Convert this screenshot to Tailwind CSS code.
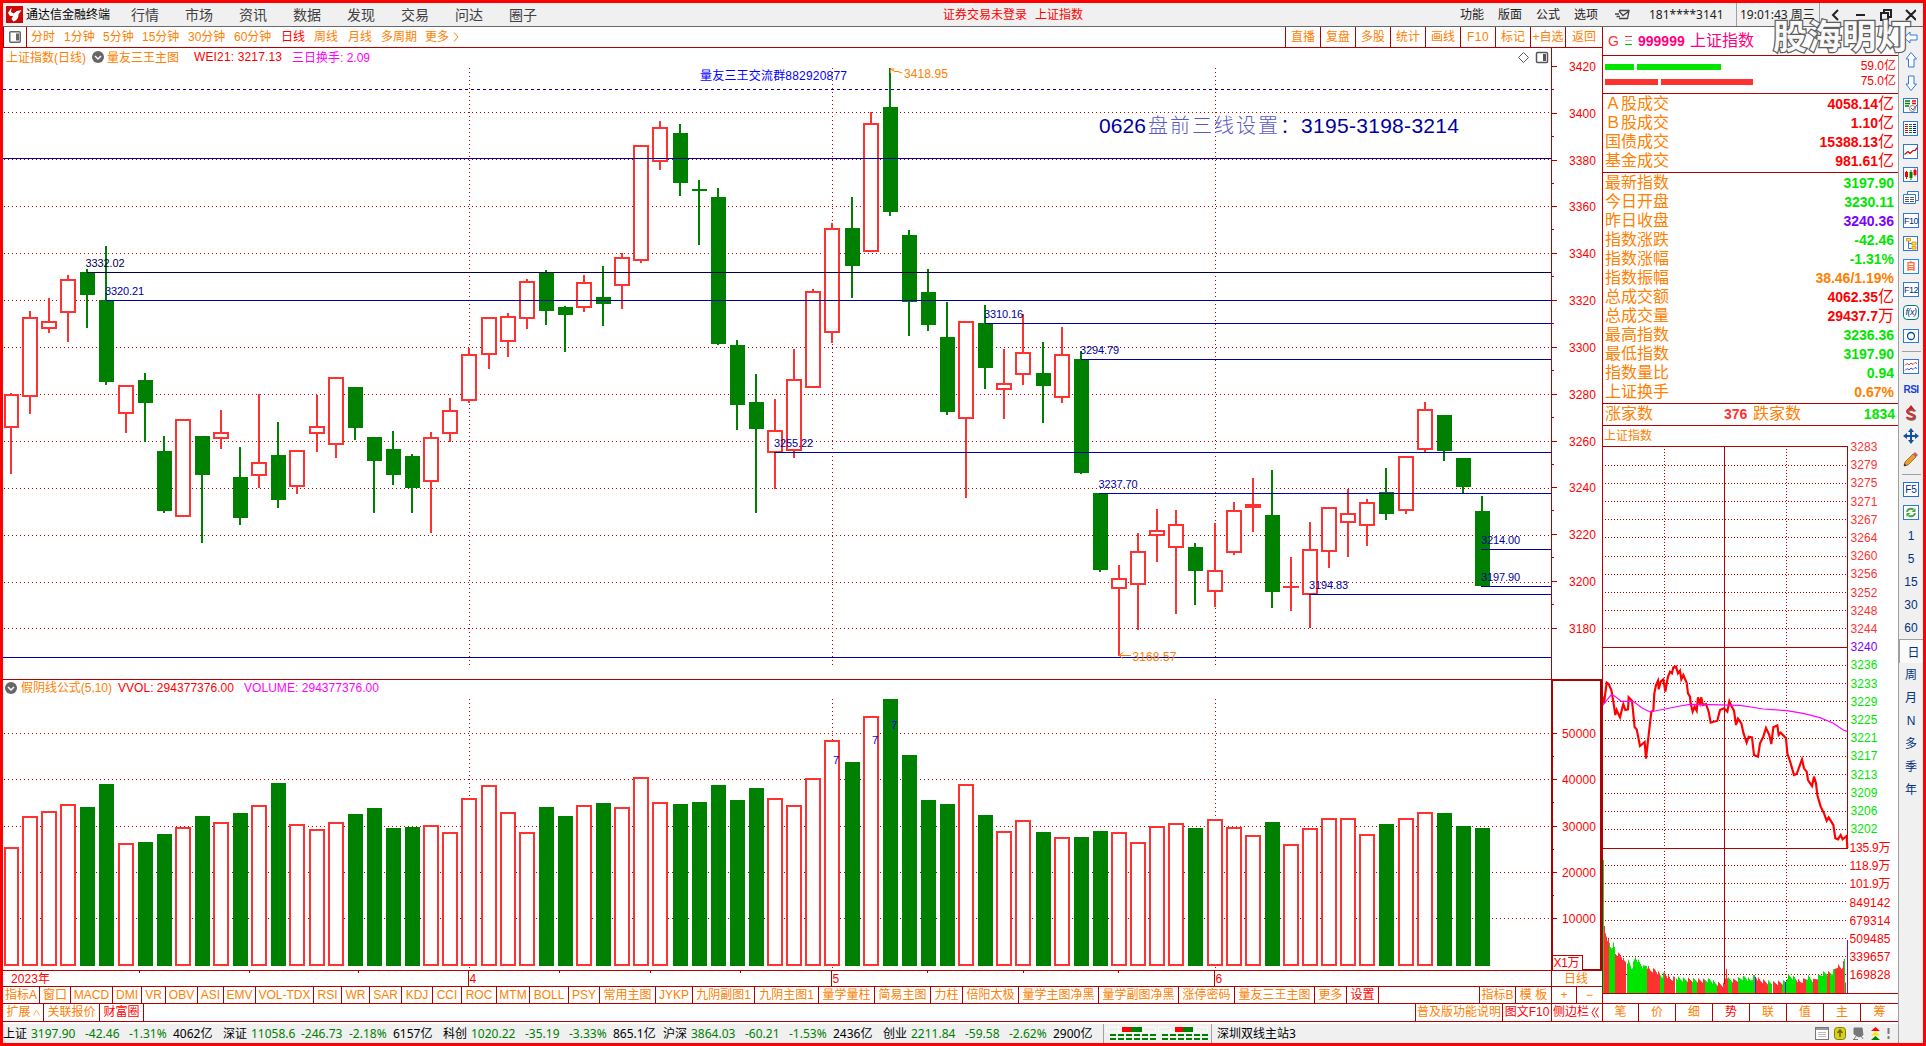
<!DOCTYPE html>
<html lang="zh-CN">
<head>
  <meta charset="UTF-8">
  <meta name="viewport" content="width=device-width, initial-scale=1.0">
  <title>通达信金融终端</title>
  <script src="https://cdn.jsdelivr.net/npm/@tailwindcss/browser@4"></script>
</head>
<body class="bg-white">
<div class="relative w-[1926px] h-[1046px] border-[3px] border-[#ff0000] flex flex-col overflow-hidden text-[12px] leading-none font-['Liberation_Sans','Noto_Sans_CJK_SC',sans-serif] whitespace-nowrap">

  <!-- Title bar -->
  <header class="h-6 shrink-0 flex items-center bg-[#f0f0f0] border-b border-[#696969] text-[#404040] text-[14px]">
    <svg class="ml-[3px] w-[17px] h-[17px] shrink-0" viewBox="0 0 17 17"><rect width="17" height="17" fill="#c80a0a"/><path d="M5.500 1.500L2 7l2 3h3l-1.500 3 2 2.500c4-1.500 5-4 5-7L15.500 4 11 5 7.500 7.500 5 6z" fill="#fff"/></svg>
    <span class="ml-[3px] w-[105px] text-[12px] text-black">通达信金融终端</span>
    <nav class="flex">
      <span class="w-[54px]">行情</span><span class="w-[54px]">市场</span><span class="w-[54px]">资讯</span><span class="w-[54px]">数据</span><span class="w-[54px]">发现</span><span class="w-[54px]">交易</span><span class="w-[54px]">问达</span><span class="w-[54px]">圈子</span>
    </nav>
    <div class="ml-[380px] flex text-[12px] text-[#ff0000]"><span class="w-[92px]">证券交易未登录</span><span>上证指数</span></div>
    <div class="ml-auto flex items-center h-full text-[12px] text-[#202020]">
      <span class="w-[38px]">功能</span><span class="w-[38px]">版面</span><span class="w-[38px]">公式</span><span class="w-[40px]">选项</span>
      <svg class="w-4 h-3 mr-[19px]" viewBox="0 0 16 12" fill="none" stroke="#444" stroke-width="1.300"><path d="M5 1.500h10l-1.500 8H5M5 2l4 4.500L15 2M1 5h4M2.500 7.500H6"/></svg>
      <span class="w-[87px] font-['Noto_Sans']">181****3141</span>
      <div class="h-full w-[84px] border-x border-[#a0a0a0] flex items-center pl-[3px] font-['Noto_Sans','Noto_Sans_CJK_SC']">19:01:43 周三</div>
      <svg class="w-[96px] h-[20px] mr-[7px]" viewBox="1820 4 96 20" fill="none" stroke="#222" stroke-width="2"><path d="M1838 9l-5 5 5 5M1856 14h9M1881 12h7v7h-7zM1884 12v-3h7v7h-3M1906 9l10 10M1916 9l-10 10"/></svg>
    </div>
  </header>

  <div class="flex flex-1 min-h-0">
    <div class="w-[1895px] shrink-0 flex flex-col">
      <div class="flex h-[995px] shrink-0">

        <!-- Chart column -->
        <main class="w-[1599px] shrink-0 flex flex-col">
          <div class="h-[21px] shrink-0 flex items-center border-b border-[#b00000] text-[#ff8000]">
            <div class="w-6 h-full border-x border-[#b00000] flex items-center justify-center mr-1">
              <svg class="w-3 h-3" viewBox="0 0 12 12"><rect x=".75" y=".75" width="10.500" height="10.500" rx="1" fill="none" stroke="#666" stroke-width="1.500"/><rect x="7" y="2.500" width="3" height="7" fill="#666"/></svg>
            </div>
            <span class="w-[33px]">分时</span><span class="w-[39px]">1分钟</span><span class="w-[39px]">5分钟</span><span class="w-[46px]">15分钟</span><span class="w-[46px]">30分钟</span><span class="w-[47px]">60分钟</span><span class="w-[33px] text-[#ff0000]">日线</span><span class="w-[34px]">周线</span><span class="w-[33px]">月线</span><span class="w-[44px]">多周期</span><span class="w-[28px]">更多</span>
            <svg class="w-2 h-3" viewBox="0 0 8 12" fill="none" stroke="#ff8000"><path d="M1 1.500l4 4.500-4 4.500"/></svg>
            <div class="ml-auto h-full flex text-center leading-[20px] border-l border-[#b00000]">
              <span class="w-[35px] border-r border-[#b00000]">直播</span><span class="w-[35px] border-r border-[#b00000]">复盘</span><span class="w-[35px] border-r border-[#b00000]">多股</span><span class="w-[35px] border-r border-[#b00000]">统计</span><span class="w-[35px] border-r border-[#b00000]">画线</span><span class="w-[35px] border-r border-[#b00000] tracking-[.5px]">F10</span><span class="w-[35px] border-r border-[#b00000]">标记</span><span class="w-[35px] border-r border-[#b00000]">+自选</span><span class="w-[36px]">返回</span>
            </div>
          </div>

          <svg id="kline" class="w-[1599px] h-[939px] shrink-0 block" viewBox="3 48 1599 939"></svg>

          <!-- Indicator tabs -->
          <div class="h-[17px] shrink-0 flex border-b border-[#b00000] text-center leading-[16px] text-[#ff8000] *:shrink-0 *:border-r *:border-[#b00000]">
            <span class="w-[37px]">指标A</span><span class="w-[31px]">窗口</span><span class="w-[42px]">MACD</span><span class="w-[29px]">DMI</span><span class="w-[24px]">VR</span><span class="w-[32px]">OBV</span><span class="w-[26px]">ASI</span><span class="w-[32px]">EMV</span><span class="w-[58px]">VOL-TDX</span><span class="w-[28px]">RSI</span><span class="w-[28px]">WR</span><span class="w-[32px]">SAR</span><span class="w-[31px]">KDJ</span><span class="w-[29px]">CCI</span><span class="w-[35px]">ROC</span><span class="w-[33px]">MTM</span><span class="w-[39px]">BOLL</span><span class="w-[31px]">PSY</span><span class="w-[56px]">常用主图</span><span class="w-[37px]">JYKP</span><span class="w-[62px]">九阴副图1</span><span class="w-[64px]">九阴主图1</span><span class="w-[56px]">量学量柱</span><span class="w-[56px]">简易主图</span><span class="w-[32px]">力柱</span><span class="w-[56px]">倍阳太极</span><span class="w-[80px]">量学主图净黑</span><span class="w-[80px]">量学副图净黑</span><span class="w-[56px]">涨停密码</span><span class="w-[80px]">量友三王主图</span><span class="w-[32px]">更多</span><span class="w-[32px] text-[#ff0000]">设置</span>
            <span class="w-[101px]"></span><span class="w-[36px]">指标B</span><span class="w-[36px]">模 板</span><span class="w-[25px]">+</span><span class="w-[25px] !border-r-0">−</span>
          </div>
          <div class="h-[18px] shrink-0 flex border-b border-[#b00000] text-center leading-[17px] text-[#ff8000] *:shrink-0 *:border-r *:border-[#b00000]">
            <span class="w-[41px] flex justify-center items-center">扩展<svg class="ml-[2px] w-[7px] h-[7px]" viewBox="0 0 7 7" fill="none" stroke="#ffb060"><path d="M.5 6.500l3-5.500 3 5.500"/></svg></span><span class="w-[56px]">关联报价</span><span class="w-[44px] text-[#ff0000]">财富圈</span>
            <span class="w-[1272px]"></span><span class="w-[87px]">普及版功能说明</span><span class="w-[49px] text-[#ff0000]">图文F10</span><span class="w-[50px] !border-r-0 flex items-center pl-px text-[#ff0000]">侧边栏<svg class="ml-[2px] w-[8px] h-[11px]" viewBox="0 0 8 11" fill="none" stroke="#ff0000"><path d="M4 .5l-3 5 3 5M7.500 .5l-3 5 3 5"/></svg></span>
          </div>
        </main>

        <!-- Quote panel -->
        <aside class="w-[296px] shrink-0 flex flex-col border-l border-[#b00000]">
          <div class="h-[29px] shrink-0 flex items-center border-b border-[#b00000] pl-[5px] pb-px">
            <span class="text-[14px] text-[#ff3232] w-[17px]">G</span>
            <svg class="w-[7px] h-[9px] mr-[6px]" viewBox="0 0 7 9"><path d="M0 .5h7" stroke="#ff3232"/><path d="M0 4.500h7" stroke="#bbb"/><path d="M0 8.500h7" stroke="#00c800"/></svg>
            <span class="text-[14px] font-bold text-[#ff0080] w-[52px]">999999</span>
            <span class="text-[16px] text-[#ff0080]">上证指数</span>
          </div>
          <div class="h-[38px] shrink-0 border-b border-[#b00000] pl-[2px] pr-[2px] pt-[3px] text-[#ff0000]">
            <div class="h-[15px] flex items-center"><div class="w-[29px] h-[6px] bg-[#00e600]"></div><div class="ml-[3px] w-[84px] h-[6px] bg-[#00e600]"></div><span class="ml-auto pb-[2px]">59.0亿</span></div>
            <div class="h-[15px] flex items-center"><div class="w-[53px] h-[6px] bg-[#ff3232]"></div><div class="ml-[3px] w-[92px] h-[6px] bg-[#ff3232]"></div><span class="ml-auto pb-[2px]">75.0亿</span></div>
          </div>
          <div id="turnover" class="h-[79px] shrink-0 border-b border-[#b00000] pl-[2px] pr-[4px]"></div>
          <div id="quotes" class="h-[231px] shrink-0 border-b border-[#b00000] pl-[2px] pr-[4px]"></div>
          <div class="h-[22px] shrink-0 flex items-center border-b border-[#b00000] pl-[2px] pr-[3px] pb-px text-[16px] text-[#ff8000]">
            <span class="w-[119px]">涨家数</span><span class="w-[29px] text-[14px] font-bold text-[#ff3232]">376</span><span>跌家数</span><span class="ml-auto text-[14px] font-bold text-[#00e600]">1834</span>
          </div>
          <svg id="minute" class="w-[295px] h-[578px] shrink-0 block" viewBox="1603 426 295 578"></svg>
          <div class="h-[18px] shrink-0 flex border-b border-[#b00000] text-center leading-[17px] text-[#ff8000]">
            <span class="w-[36px] border-r border-[#b00000]">笔</span><span class="w-[37px] border-r border-[#b00000]">价</span><span class="w-[37px] border-r border-[#b00000]">细</span><span class="w-[37px] border-r border-[#b00000] text-[#ff0000]">势</span><span class="w-[37px] border-r border-[#b00000]">联</span><span class="w-[37px] border-r border-[#b00000]">值</span><span class="w-[37px] border-r border-[#b00000]">主</span><span class="w-[37px]">筹</span>
          </div>
        </aside>
      </div>

      <!-- Status bar -->
      <footer class="mt-[2px] h-[19px] flex items-center bg-[#f0f0f0] font-['Noto_Sans','Noto_Sans_CJK_SC',sans-serif] text-black">
        <div class="grid grid-cols-[28px_54px_44px_44px_50px]"><span>上证</span><span class="text-[#008000]">3197.90</span><span class="text-[#008000]">-42.46</span><span class="text-[#008000]">-1.31%</span><span>4062亿</span></div>
        <div class="grid grid-cols-[28px_50px_48px_44px_50px]"><span>深证</span><span class="text-[#008000]">11058.6</span><span class="text-[#008000]">-246.73</span><span class="text-[#008000]">-2.18%</span><span>6157亿</span></div>
        <div class="grid grid-cols-[28px_54px_44px_44px_50px]"><span>科创</span><span class="text-[#008000]">1020.22</span><span class="text-[#008000]">-35.19</span><span class="text-[#008000]">-3.33%</span><span>865.1亿</span></div>
        <div class="grid grid-cols-[28px_54px_44px_44px_50px]"><span>沪深</span><span class="text-[#008000]">3864.03</span><span class="text-[#008000]">-60.21</span><span class="text-[#008000]">-1.53%</span><span>2436亿</span></div>
        <div class="grid grid-cols-[28px_54px_44px_44px_50px]"><span>创业</span><span class="text-[#008000]">2211.84</span><span class="text-[#008000]">-59.58</span><span class="text-[#008000]">-2.62%</span><span>2900亿</span></div>
        <div class="h-full w-[109px] border-x border-[#a0a0a0] pl-[2px]">
          <svg class="w-[104px] h-[18px]" viewBox="1106 1024 104 18">
            <path d="M1106.500 1032v-5h49v5zM1158.500 1032v-5h49v5zM1118.500 1027v5M1143.500 1027v5M1170.500 1027v5M1195.500 1027v5" fill="none" stroke="#fff"/>
            <path d="M1122 1027h9v5h-9zM1175 1027h8v5h-8z" fill="#ff0000"/><path d="M1131 1027h11v5h-11zM1183 1027h10v5h-10z" fill="#008000"/>
            <path d="M1110 1035h47M1110 1039h47M1162 1035h47M1162 1039h47" stroke="#008000" stroke-width="2" stroke-dasharray="6 2"/>
          </svg>
        </div>
        <span class="ml-[5px]">深圳双线主站3</span>
        <svg class="ml-auto mr-[6px] w-[78px] h-[16px]" viewBox="1814 1025 78 16">
          <rect x="1815.500" y="1026.500" width="13" height="12" fill="#fff" stroke="#777"/><path d="M1816 1028h12" stroke="#999" stroke-width="2"/><path d="M1818 1031.500h8M1818 1033.500h8M1818 1035.500h8" stroke="#bbb"/>
          <rect x="1834.500" y="1026.500" width="11" height="12" rx="3" fill="#d8d020" stroke="#808000"/><path d="M1840 1036v-6M1837.500 1032l2.500-3 2.500 3" stroke="#6b6b00" fill="none" stroke-width="1.500"/>
          <path d="M1854 1027l8 0 1 7-4 2-5-3zM1857 1034l-3 4M1853 1038.500h5M1861 1035l2 3" fill="#777" stroke="#777"/>
          <path d="M1871 1030l4.500-4 4.500 4z" fill="#f00"/><path d="M1871 1034.500l4.500-4 4.500 4z" fill="#ee0"/><path d="M1871 1039l4.500-4 4.500 4z" fill="#008000"/>
          <path d="M1888.500 1027v6M1888.500 1035v3" stroke="#777" stroke-width="2"/>
        </svg>
      </footer>
    </div>

    <!-- Right tool strip -->
    <div class="w-[25px] shrink-0 bg-[#f0f0f0] border-l border-[#a0a0a0] flex flex-col items-center text-[#003080] *:h-[23px] *:w-full *:shrink-0 *:flex *:items-center *:justify-center">
      <div class="!h-[21px]"><svg class="w-4 h-4" viewBox="0 0 16 16" fill="#fff" stroke="#3278dc"><path d="M1 7.500l6-5.500v3h7v5H7v3z"/></svg></div>
      <div><svg class="w-4 h-4" viewBox="0 0 16 16" fill="#fff" stroke="#3278dc"><path d="M8 .5l5.500 6.500H11v8H5.500V7H3z"/></svg></div>
      <div><svg class="w-4 h-4" viewBox="0 0 16 16" fill="#fff" stroke="#3278dc"><path d="M8 15.500L13.500 9H11V1H5.500v8H3z"/></svg></div>
      <div><svg class="w-4 h-4" viewBox="0 0 16 16" fill="none"><rect x=".5" y=".5" width="14" height="14" fill="#fff" stroke="#3278dc"/><path d="M2 3h5M2 5.500h5M2 8h4" stroke="#008000" stroke-width="1.300"/><path d="M9 3h4M9 5.500h4" stroke="#f00" stroke-width="1.300"/><circle cx="9.500" cy="10.500" r="3" stroke="#888"/><path d="M8 10l2 2 4-5" stroke="#555"/></svg></div>
      <div><svg class="w-4 h-4" viewBox="0 0 16 16" fill="none"><rect x=".5" y=".5" width="14" height="14" fill="#fff" stroke="#3278dc"/><path d="M2 3.500h3M2 5.500h3M2 7.500h3M2 9.500h3M2 11.500h3" stroke="#f00"/><path d="M6 3.500h3M6 5.500h3M6 7.500h3M6 9.500h3M6 11.500h3" stroke="#008000"/><path d="M10 3.500h3M10 5.500h3M10 7.500h3M10 9.500h3M10 11.500h3" stroke="#00f"/></svg></div>
      <div><svg class="w-4 h-4" viewBox="0 0 16 16" fill="none"><rect x=".5" y=".5" width="14" height="14" fill="#fff" stroke="#3278dc"/><path d="M1.500 10.500l3.500-3 2 2 3-3h2l2.500-3" stroke="#d00000" stroke-width="1.200"/></svg></div>
      <div><svg class="w-4 h-4" viewBox="0 0 16 16"><rect x=".5" y=".5" width="14" height="14" fill="#fff" stroke="#3278dc"/><path d="M2 5h3v5H2zM10.500 3h3v5h-3z" fill="#f00"/><path d="M3.500 4v8M12 1.500v8" stroke="#f00"/><path d="M6.500 5h3v6h-3z" fill="#008000"/><path d="M8 3v10" stroke="#008000"/></svg></div>
      <div><svg class="w-4 h-4" viewBox="0 0 16 16" fill="#fff" stroke="#3278dc"><path d="M4.500 1.500h11v9h-11z"/><path d="M.5 4.500h12v9H.5z"/><path d="M2 7.500h4M7 7.500h4M2 9.500h4M7 9.500h4M2 11.500h4M7 11.500h4" stroke="#555"/></svg></div>
      <div><span class="w-4 h-[15px] border border-[#3278dc] bg-white text-[9px] leading-[14px] text-center tracking-tighter">F10</span></div>
      <div><svg class="w-4 h-4" viewBox="0 0 16 16" fill="none"><rect x=".5" y=".5" width="14" height="14" fill="#fff" stroke="#3278dc"/><path d="M5.500 5v7.500H9M5.500 7.500H9" stroke="#3278dc"/><path d="M3.500 2.500h4v2.500h-4zM9 6h4v3H9zM9 10.500h4v2.500H9z" fill="#ffe060" stroke="#e0a000"/></svg></div>
      <div><span class="w-4 h-[15px] border border-[#1e8ce6] bg-white text-[10px] leading-[13px] text-center font-bold text-[#ff7040]">自</span></div>
      <div><span class="w-4 h-[15px] border border-[#3278dc] bg-white text-[9px] leading-[14px] text-center tracking-tighter">F12</span></div>
      <div><span class="w-4 h-[15px] border border-[#008080] rounded bg-white text-[9px] leading-[13px] text-center italic tracking-tighter">f(x)</span></div>
      <div><svg class="w-4 h-[14px]" viewBox="0 0 16 14" fill="#fff" stroke="#3278dc"><rect x=".5" y=".5" width="15" height="13"/><circle cx="8" cy="7" r="3.500" stroke="#0050a0" stroke-width="1.300"/></svg></div>
      <div class="!h-2"><i class="w-[19px] h-px bg-[#a0a0a0]"></i></div>
      <div><svg class="w-4 h-4" viewBox="0 0 16 16" fill="none"><rect x=".5" y=".5" width="15" height="14" fill="#fff" stroke="#3278dc"/><path d="M2 6.500l2-2 2 1.500 2-2 2 1.500 2-2 2 1" stroke="#f03030"/><path d="M2 11.500l2-2 2 1.500 2-2 2 1.500 2-2 2 1" stroke="#3050e0"/></svg></div>
      <div class="font-bold text-[10px] text-[#2040d0] tracking-tighter">RSI</div>
      <div><svg class="w-[14px] h-4" viewBox="0 0 14 16" fill="none"><path d="M11 6.500C10 4 4 4 4 7s7 2 7 5-6 3.500-7.500.5" stroke="#707070" stroke-width="2.500"/><path d="M10 6C9 3.500 3 3.500 3 6.500s7 2 7 5-6 3-7.500.5" stroke="#d83030" stroke-width="2"/><path d="M7 0l3 4H4z" fill="#c02020"/></svg></div>
      <div><svg class="w-4 h-4" viewBox="0 0 16 16"><path d="M8 0l3 4H9v3h3V5l4 3-4 3V9H9v3h2l-3 4-3-4h2V9H4v2L0 8l4-3v2h3V4H5z" fill="#1450a0"/></svg></div>
      <div><svg class="w-4 h-4" viewBox="0 0 16 16"><path d="M1 15l1-4 8-8 3 3-8 8z" fill="#e8a030" stroke="#805010" stroke-width=".7"/><path d="M10 3l2-2 3 3-2 2z" fill="#c86070"/><path d="M1 15l.6-2.400L3.500 14.400z" fill="#222"/></svg></div>
      <div class="!h-2"><i class="w-[19px] h-px bg-[#a0a0a0]"></i></div>
      <div><span class="w-4 h-[15px] border border-[#1e6edc] bg-white text-[10px] leading-[14px] text-center">F5</span></div>
      <div><svg class="w-4 h-[15px]" viewBox="0 0 16 15" fill="none"><rect x=".5" y=".5" width="15" height="14" fill="#fff" stroke="#3278dc"/><path d="M4 7a4 3.500 0 0 1 6.500-2.500M12 8a4 3.500 0 0 1-6.500 2.500" stroke="#40a840" stroke-width="2"/><path d="M12.500 3v4H8.500zM3.500 12V8h4z" fill="#40a840"/></svg></div>
      <div>1</div><div>5</div><div>15</div><div>30</div><div>60</div>
      <div class="!h-[24px] bg-[#fafafa] border-t border-l border-[#a0a0a0] pt-[2px] pl-1">日</div>
      <div>周</div><div>月</div><div>N</div><div>多</div><div>季</div><div>年</div>
    </div>
  </div>

  <!-- Watermark over the top right corner -->
  <svg class="absolute left-[1764px] top-[8px] w-[150px] h-[50px]" viewBox="0 0 150 50">
    <text x="6" y="38" font-size="34" font-weight="bold" textLength="138" font-family="Noto Sans CJK SC" fill="#fff" fill-opacity=".95" stroke="#606060" stroke-width="2.500" paint-order="stroke">股海明灯</text>
  </svg>
</div>

<script>
  const RED = '#ff3232', GREEN = '#008000', GRID = '#b00000', NAVY = '#0000a0', ORANGE = '#ff8000';

  const line = (x1, y1, x2, y2, c, extra = '') => `<path d="M${x1} ${y1}L${x2} ${y2}" stroke="${c}" fill="none" shape-rendering="crispEdges" ${extra}/>`;
  const rect = (x, y, w, h, c) => `<rect x="${x}" y="${y}" width="${w}" height="${h}" fill="${c}"/>`;
  const text = (x, y, s, c, size = 12, len = 0) => `<text x="${x}" y="${y}" font-size="${size}" fill="${c}" ${len ? `textLength="${len}"` : ''}>${s}</text>`;

  // type (r = up, g = down), high, body top, body bottom, low, volume top
  const bars = [
    ['r',393,394,428,474,847],['r',311,317,397,414,816],['r',298,321,329,333,811],['r',275,279,313,342,804],['g',269,272,295,328,807],
    ['g',246,300,382,385,784],['r',385,385,414,433,843],['g',373,380,403,442,842],['g',436,451,511,513,834],['r',419,419,517,517,827],
    ['g',436,436,475,543,816],['r',410,432,439,449,822],['g',447,477,518,525,813],['r',394,462,476,488,805],['g',422,455,500,508,783],
    ['r',450,450,487,494,824],['r',395,426,434,452,829],['r',377,377,445,458,822],['g',387,387,428,440,814],['g',437,437,461,513,808],
    ['g',431,449,475,485,828],['g',454,456,488,513,827],['r',432,437,482,533,825],['r',398,410,434,442,832],['r',348,354,401,403,798],
    ['r',317,317,355,369,785],['r',313,316,342,357,812],['r',279,281,319,329,832],['g',270,273,311,325,807],['g',306,307,315,352,816],
    ['r',275,282,308,312,805],['g',266,297,304,326,803],['r',253,257,286,309,807],['r',145,145,261,263,777],['r',121,127,162,170,802],
    ['g',124,133,183,196,804],['g',180,189,191,245,802],['g',188,197,344,345,785],['g',340,345,405,430,800],['g',374,402,429,513,788],
    ['r',399,430,453,489,798],['r',349,379,451,458,805],['r',289,291,388,388,778],['r',223,228,333,343,740],['g',197,228,266,298,762],
    ['r',112,123,252,252,716],['g',68,107,212,216,699],['g',230,235,302,336,755],['g',269,292,325,331,800],['g',302,337,412,415,804],
    ['r',321,321,419,498,784],['g',305,323,368,389,815],['r',349,383,390,419,831],['r',314,352,375,385,820],['g',342,373,386,423,832],
    ['r',327,354,398,403,837],['g',351,359,473,474,837],['g',493,493,570,572,831],['r',565,578,589,656,832],['r',533,551,585,630,842],
    ['r',509,530,536,562,826],['r',510,524,548,614,823],['g',543,547,571,605,828],['r',523,570,592,607,819],['r',502,510,553,555,827],
    ['r',478,504,508,532,835],['g',470,515,592,608,822],['r',557,586,588,611,844],['r',522,549,595,628,828],['r',507,507,552,568,818],
    ['r',489,513,523,557,818],['r',499,502,526,546,834],['g',468,492,514,520,824],['r',456,456,511,514,818],['r',402,409,450,452,812],
    ['g',415,415,451,461,813],['g',458,458,487,494,826],['g',496,511,586,586,828]
  ];

  function drawKline() {
    let s = '';
    // dotted grid
    for (const y of [112.5,159.5,206.5,253.5,300.5,347.5,394.5,441.5,488.5,535.5,582.5,628.5,733.5,779.5,826.5,872.5,918.5]) {
      s += line(4, y, 1551, y, GRID, 'stroke-dasharray="1 3"');
    }
    for (const x of [469.5, 832.5, 1215.5]) {
      s += line(x, 68, x, 665, GRID, 'stroke-dasharray="1 3"') + line(x, 699, x, 968, GRID, 'stroke-dasharray="1 3"');
      s += line(x - 1, 971, x - 1, 986, GRID);
    }

    // candles and volume
    bars.forEach(([t, hi, top, bot, lo, vol], i) => {
      const cx = Math.round(10.9 + i * 19.105);
      if (t === 'r') {
        const left = Math.max(cx - 8, 4), w = cx + 8 - left;
        if (hi < top) s += rect(cx - 1, hi, 2, top - hi, RED);
        if (lo > bot) s += rect(cx - 1, bot, 2, lo - bot, RED);
        s += rect(left, top, w, bot - top, RED);
        if (bot - top > 4) s += rect(left + 2, top + 2, w - 4, bot - top - 4, '#fff');
        s += rect(left, vol, w, 966 - vol, RED) + rect(left + 2, vol + 2, w - 4, 966 - vol - 4, '#fff');
      } else {
        s += rect(cx - 1, hi, 2, lo - hi, GREEN) + rect(cx - 7, top, 15, bot - top, GREEN);
        s += rect(cx - 7, vol, 15, 966 - vol, GREEN);
      }
    });

    // horizontal price lines
    s += line(3, 89.5, 1551, 89.5, NAVY, 'stroke-dasharray="3 3"');
    for (const [x, y, c] of [[3,158.5],[87,272.5,'#000050'],[106,300.5],[985,323.5],[1081,359.5],[774,452.5],[1099,493.5],[1309,594.5],[1481,549.5],[1481,586.5],[3,657.5]]) {
      s += line(x, y, 1551, y, c || NAVY);
    }
    s += text(85.5, 267, '3332.02', '#000050', 11, 39);
    for (const [x, y, v] of [[105,295,'3320.21'],[984,318,'3310.16'],[1080,354,'3294.79'],[774,447,'3255.22'],[1098.5,488,'3237.70'],[1309,589,'3194.83'],[1481,544,'3214.00'],[1481,581,'3197.90']]) {
      s += text(x, y, v, NAVY, 11, 39);
    }
    s += `<path d="M902 73l-4-1.500-3 0-4-2M890.500 73v-4h4" stroke="${ORANGE}" fill="none"/>` + text(904, 78, '3418.95', ORANGE, 12, 44);
    s += `<path d="M1131 655.500h-12M1123 652.500l-4 3 4 3" stroke="${ORANGE}" fill="none"/>` + text(1132.5, 661, '3168.57', ORANGE, 12, 44);
    s += text(700, 80, '量友三王交流群882920877', '#0000ff', 12, 147);
    s += text(1099, 133, '0626', NAVY, 21, 47) + `<text x="1148" y="133" font-size="20" fill="#5a5ac4" textLength="152" font-family="Noto Sans CJK SC" font-weight="300">盘前三线设置<tspan fill="#0000a0">：</tspan></text>` + text(1301, 133, '3195-3198-3214', NAVY, 21, 158);
    s += text(833, 764, '7', '#0000ff', 11) + text(872, 744, '7', '#0000ff', 11) + text(891, 729, '7', '#0000ff', 11);

    // pane headers
    const toggle = (x, y) => `<circle cx="${x}" cy="${y}" r="6" fill="#666"/><path d="M${x - 3} ${y - 1}l3 3 3-3" stroke="#fff" stroke-width="1.500" fill="none"/>`;
    s += text(6, 62, '上证指数(日线)', ORANGE, 12, 80) + toggle(98, 57) + text(107, 62, '量友三王主图', ORANGE);
    s += text(194, 61, 'WEI21: 3217.13', '#ff0000', 12, 88) + text(292, 62, '三日换手: 2.09', '#ff00ff', 12, 78);
    s += toggle(11, 688) + text(21, 692, '假阴线公式(5,10)', ORANGE, 12, 91) + text(118, 692, 'VVOL: 294377376.00', '#ff0000', 12, 116) + text(244, 692, 'VOLUME: 294377376.00', '#ff00ff', 12, 135);
    s += `<path d="M1523.500 52.500l5 5-5 5-5-5z" fill="none" stroke="#555"/><rect x="1536.500" y="52.500" width="11" height="10" rx="1" fill="none" stroke="#555" stroke-width="1.500"/><rect x="1543" y="54" width="3" height="7" fill="#555"/>`;

    // frames and axes
    s += line(1551.5, 48, 1551.5, 986, GRID) + line(3, 679.5, 1602, 679.5, GRID) + line(3, 970.5, 1602, 970.5, GRID) + line(3, 986.5, 1602, 986.5, GRID);
    s += `<rect x="1552" y="680" width="49" height="290" fill="none" stroke="${GRID}" stroke-width="2"/>`;
    for (let i = 0; i < 13; i++) {
      const y = Math.floor(66.3 + i * 46.85) + .5;
      s += line(1552, y, 1557, y, GRID) + text(1569, y + 4.5, 3420 - i * 20, '#ff0000', 12, 27);
      if (i < 12) s += line(1552, y + 23, 1554, y + 23, GRID);
    }
    [733.5, 779.5, 826.5, 872.5, 918.5].forEach((y, i) => {
      s += line(1552, y, 1557, y, GRID) + text(1562, y + 4.5, 50000 - i * 10000, '#ff0000', 12, 34);
      if (i < 4) s += line(1552, y + 23, 1554, y + 23, GRID);
    });
    s += `<rect x="1552.500" y="955.500" width="30" height="15" fill="#fff" stroke="${GRID}"/>` + text(1553.5, 967, 'X1万', '#ff0000', 12, 26);
    for (const x of [139.5, 249.5, 358.5, 559.5, 650.5, 740.5, 927.5, 1023.5, 1118.5]) s += line(x, 971, x, 973, GRID);
    s += text(11, 983, '2023年', '#ff0000', 12, 39) + text(469.5, 983, '4', '#ff0000') + text(832.5, 983, '5', '#ff0000') + text(1215.5, 983, '6', '#ff0000') + text(1564, 983, '日线', ORANGE);
    document.getElementById('kline').innerHTML = s;
  }

  function drawMinute() {
    let s = text(1604, 440, '上证指数', ORANGE);
    const ys = [465,483,501,519,537,556,574,592,610,628,665,683,701,720,738,756,774,793,811,829,865,883,901,920,938,956,974];
    for (const y of ys) s += line(1605, y + .5, 1847, y + .5, GRID, 'stroke-dasharray="1 2"');
    for (const x of [1664.5, 1786.5]) s += line(x, 449, x, 993, GRID, 'stroke-dasharray="1 2"');
    for (const y of [446.5, 647.5, 848.5]) s += line(1603, y, 1847.5, y, GRID);
    s += line(1603, 993.5, 1898, 993.5, GRID) + line(1603, 1003.5, 1898, 1003.5, GRID);
    s += line(1724.5, 447, 1724.5, 993, GRID) + line(1847.5, 446, 1847.5, 849, GRID);

    [3283,3279,3275,3271,3267,3264,3260,3256,3252,3248,3244,3240,3236,3233,3229,3225,3221,3217,3213,3209,3206,3202].forEach((v, i) => {
      s += text(1850.5, 451 + i * 18.2, v, v > 3240 ? RED : v === 3240 ? '#8000ff' : '#00e600', 12, 27);
    });
    ['135.9万','118.9万','101.9万','849142','679314','509485','339657','169828'].forEach((v, i) => {
      s += text(1849.5, 852 + i * 18.2, v, '#ff0000', 12, 41);
    });

    // volume envelope: x, top (3 units per pixel from 1600,640)
    const env = [[10,660],[13,858],[16,880],[20,893],[26,905],[32,925],[41,912],[46,942],[62,945],[73,965],[85,965],[95,985],[106,952],[115,965],[130,982],[139,975],[150,992],[165,990],[185,1010],[193,1000],[212,1018],[228,1012],[240,1018],[310,1022],[330,1020],[345,1030],[375,1035],[378,975],[383,1018],[400,1022],[415,1018],[435,1012],[450,1022],[463,1008],[480,1022],[520,1030],[557,1026],[563,1008],[585,1015],[600,1027],[625,1012],[640,1022],[655,1010],[670,1000],[695,1000],[712,978],[725,985],[733,960],[737,1050]];
    const redRuns = [[13,25],[46,78],[140,178],[192,225],[262,275],[292,315],[350,383],[395,412],[468,502],[520,545],[588,618],[640,652],[682,690],[704,730],[736,740]];
    let k = 0;
    for (let x = 10; x <= 737; x += 3) {
      if (x === 79 || x === 226 || x === 517) continue;
      while (k < env.length - 2 && env[k + 1][0] <= x) k++;
      const [a, b] = [env[k], env[k + 1]];
      let top = a[1] + (b[1] - a[1]) * (x - a[0]) / (b[0] - a[0]);
      if (x > 20) top += (x * 7 % 5 - 2) * 3;
      const c = x === 466 || x === 556 ? '#8000ff' : redRuns.some(r => x >= r[0] && x <= r[1]) ? RED : '#00e600';
      s += rect(1600 + Math.floor(x / 3), 640 + top / 3, 1, (1059 - top) / 3, c);
    }
    s += line(1847.5, 940, 1847.5, 993, '#8000ff');

    const pts = '8,190 12,170 12,190 20,128 26,132 34,150 40,185 46,225 50,210 60,232 70,192 76,210 84,208 86,172 96,182 104,262 110,268 120,318 134,306 138,356 142,320 154,215 160,212 163,160 168,135 174,122 176,148 182,125 190,118 196,155 204,110 210,95 216,100 220,82 228,80 234,100 240,92 244,118 250,105 260,128 264,160 270,170 272,190 278,215 284,200 290,212 294,172 300,190 304,172 308,195 318,192 326,215 332,248 352,242 360,210 372,205 382,215 388,184 394,198 402,212 408,255 414,236 424,250 430,278 440,308 446,290 456,292 462,345 474,350 480,310 490,290 498,264 508,285 514,312 520,262 532,256 536,285 542,278 558,295 562,340 572,370 582,405 590,402 606,358 612,385 620,395 624,420 636,438 642,410 648,430 652,465 662,500 672,520 680,542 686,532 700,555 706,595 714,598 722,585 728,598 740,588 742,624';
    const avg = '8,196 34,164 44,168 64,184 100,184 125,203 150,216 180,210 240,198 270,193 330,194 420,196 490,207 560,212 610,220 660,233 700,250 730,270 742,274';
    s += `<g transform="translate(1600 640) scale(.33333)" fill="none"><polyline points="${pts}" stroke="#ff0000" stroke-width="6.500"/><polyline points="${avg}" stroke="#ff00ff" stroke-width="3.500"/></g>`;
    document.getElementById('minute').innerHTML = s;
  }

  // label, value, unit, colour
  const turnover = [['Ａ股成交','4058.14','亿','#ff0000'],['Ｂ股成交','1.10','亿','#ff0000'],['国债成交','15388.13','亿','#ff0000'],['基金成交','981.61','亿','#ff0000']];
  const quotes = [
    ['最新指数','3197.90','','#00e600'],['今日开盘','3230.11','','#00e600'],['昨日收盘','3240.36','','#8000ff'],['指数涨跌','-42.46','','#00e600'],
    ['指数涨幅','-1.31%','','#00e600'],['指数振幅','38.46/1.19%','',ORANGE],['总成交额','4062.35','亿','#ff0000'],['总成交量','29437.7','万','#ff0000'],
    ['最高指数','3236.36','','#00e600'],['最低指数','3197.90','','#00e600'],['指数量比','0.94','','#00e600'],['上证换手','0.67%','',ORANGE]
  ];
  const fill = (id, rows) => {
    document.getElementById(id).innerHTML = rows.map(([label, value, unit, color]) =>
      `<div class="h-[19px] flex items-center justify-between text-[16px] text-[#ff8000]"><span>${label}</span><span class="flex items-center" style="color:${color}"><b class="text-[14px]">${value}</b><span class="text-[16px]">${unit}</span></span></div>`
    ).join('');
  };

  drawKline();
  drawMinute();
  fill('turnover', turnover);
  fill('quotes', quotes);
</script>
</body>
</html>
